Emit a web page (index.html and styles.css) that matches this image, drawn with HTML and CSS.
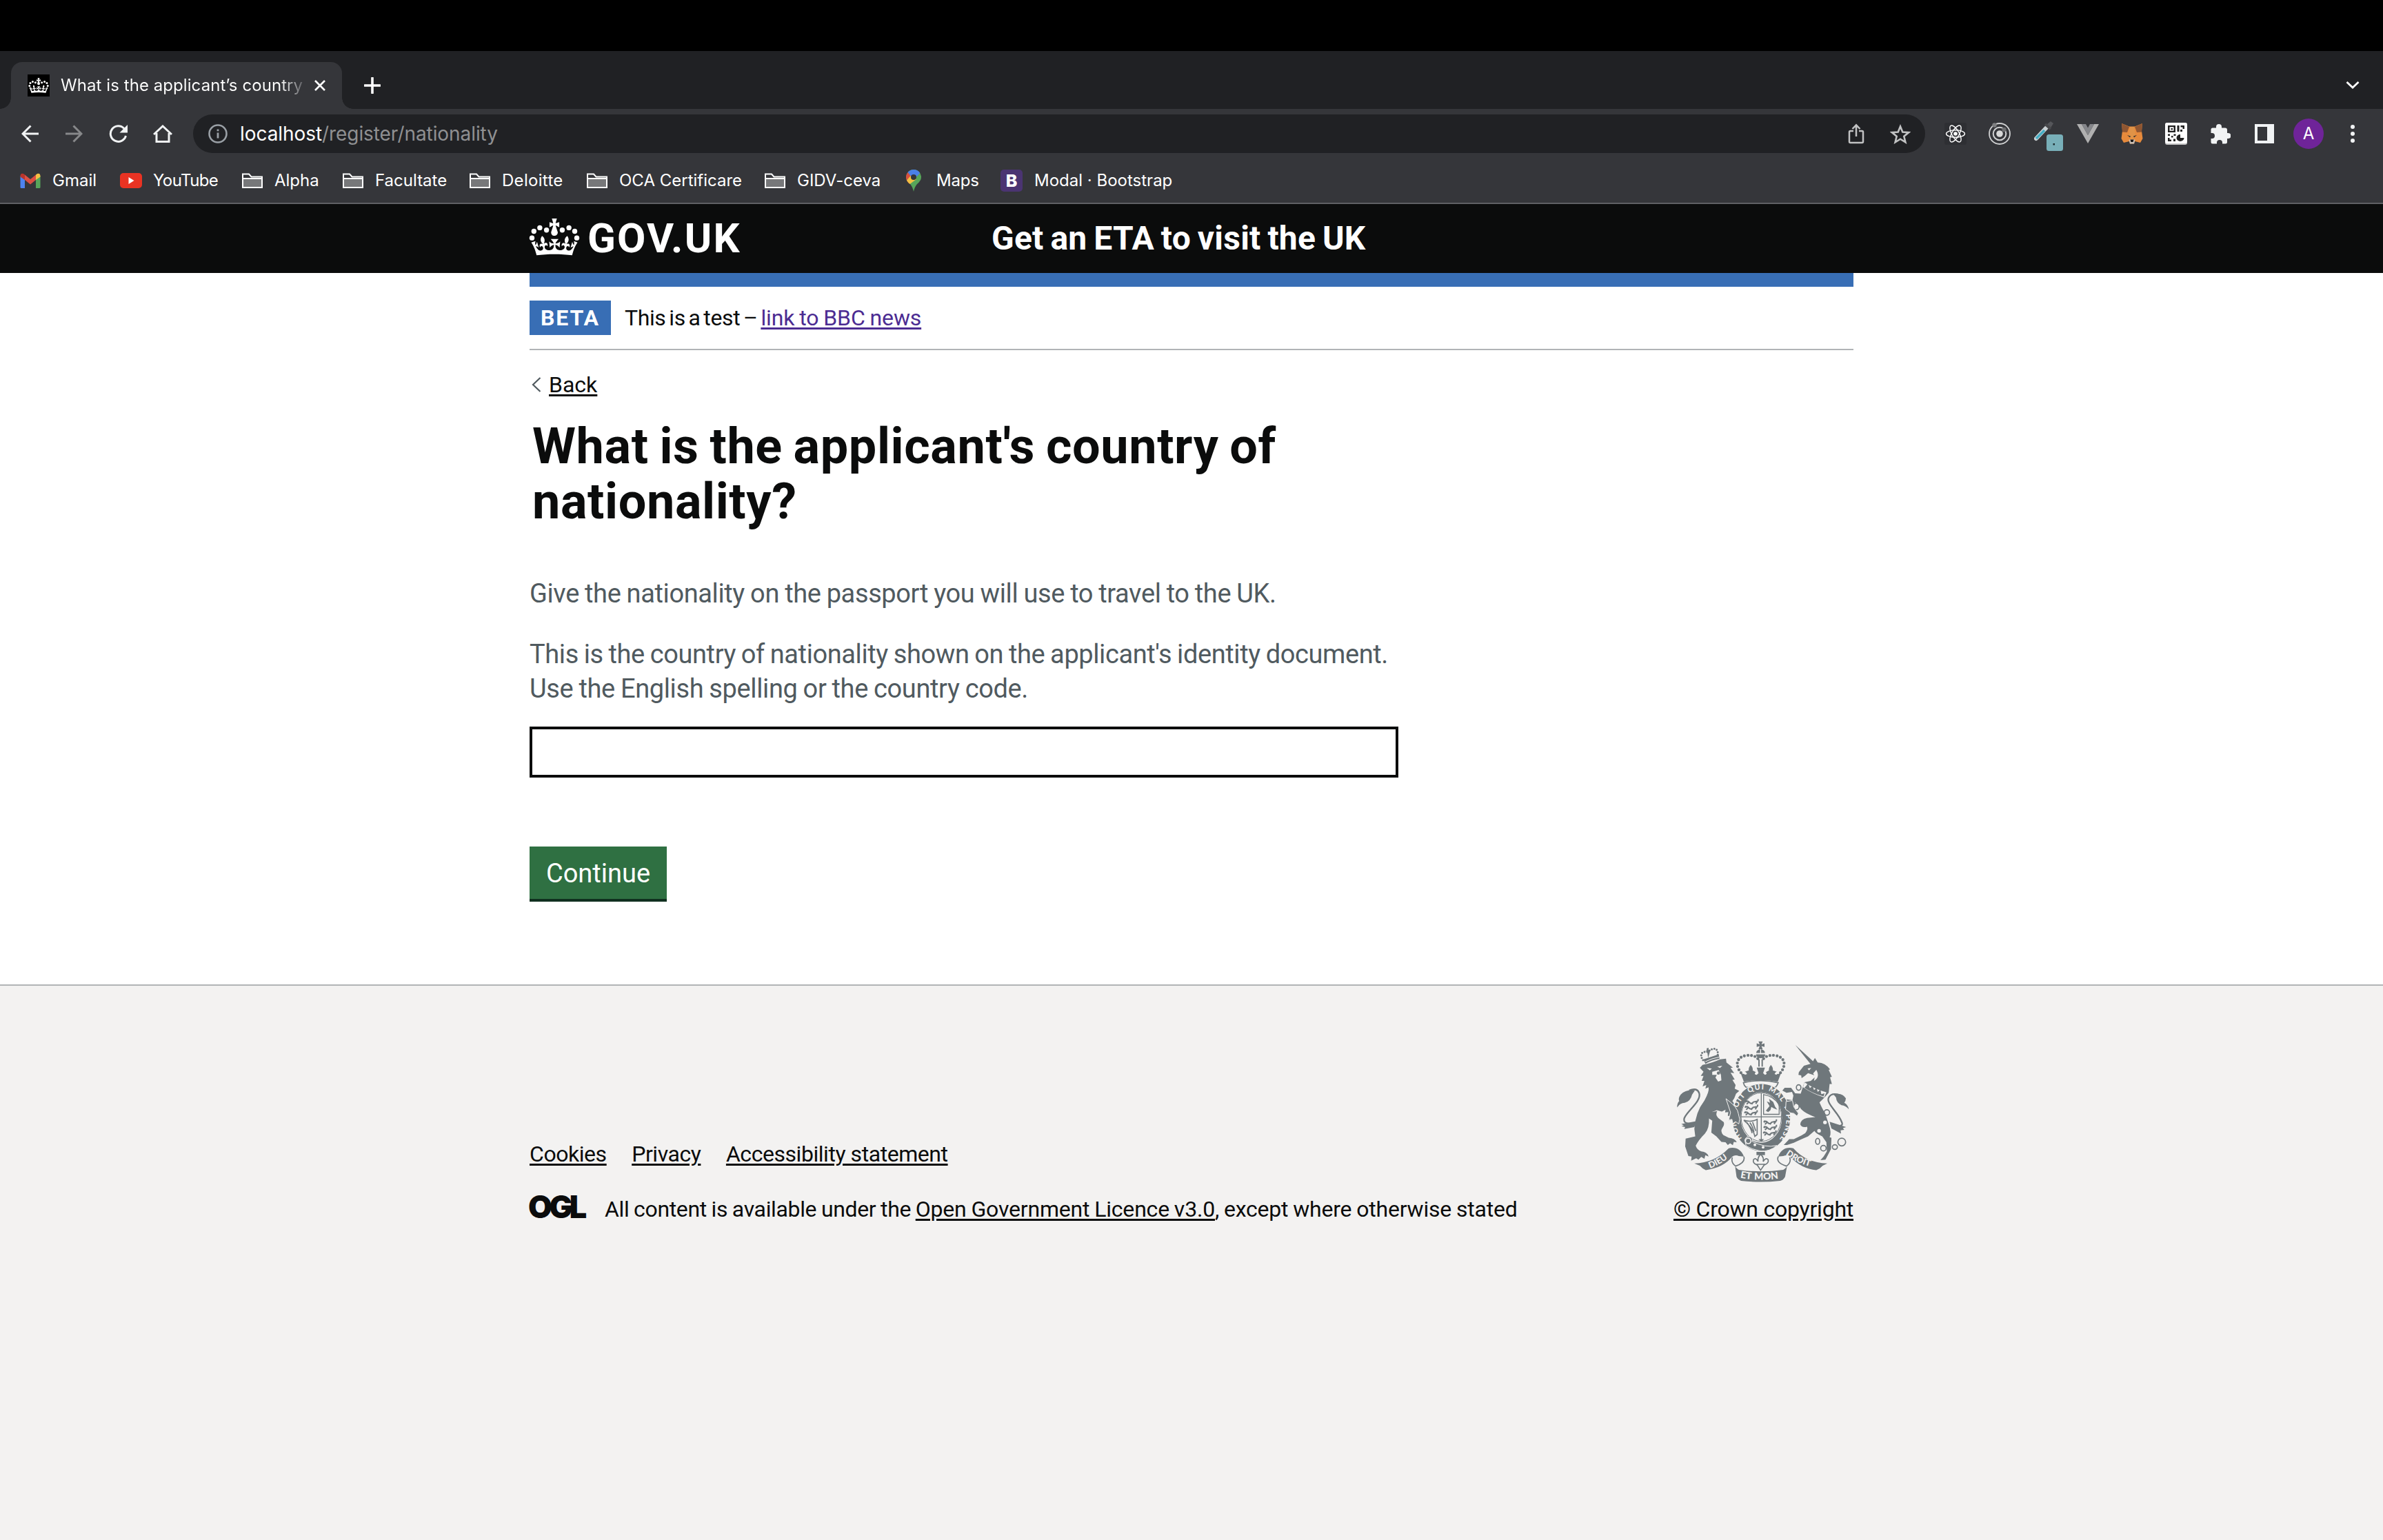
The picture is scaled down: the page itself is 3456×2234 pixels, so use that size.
FILE: index.html
```html
<!DOCTYPE html>
<html lang="en">
<head>
<meta charset="utf-8">
<title>What is the applicant's country of nationality?</title>
<link rel="stylesheet" href="styles.css">
</head>
<body>
<svg class="defs" width="0" height="0">
  <defs>
    <symbol id="folder" viewBox="0 0 32 24"><path d="M2 22V2.500H11L14.500 6.500H30V22Z" fill="#35363a" stroke="#fff" stroke-width="2"/><path d="M2 9H30V22H2Z" fill="#77787a" stroke="#fff" stroke-width="2"/></symbol>
    <symbol id="crown" viewBox="22 33 220 161">
      <g fill="currentColor">
        <circle cx="35" cy="117" r="11"/><circle cx="43.500" cy="88" r="11"/><circle cx="69" cy="73" r="11"/><circle cx="98" cy="83" r="11"/>
        <circle cx="229" cy="117" r="11"/><circle cx="220" cy="88" r="11"/><circle cx="195" cy="73" r="11"/><circle cx="166" cy="83" r="11"/>
        <path transform="translate(29.600 33) scale(6.400)" d="M17 4.700l2.300 1.200V2.500l-2.300.7-.2-.2.9-3h-3.400l.9 3-.2.200c-.1.100-2.300-.7-2.300-.7v3.400L15 4.700c.1.100.1.200.2.200l-1.300 4c-.1.200-.1.400-.1.600 0 1.100.8 2 1.900 2.200h.7c1-.2 1.900-1.100 1.900-2.100 0-.2 0-.4-.1-.6l-1.300-4c-.1-.2 0-.2.100-.3"/>
        <path transform="translate(32 3) scale(6.250 6.300)" d="M16 29.200c4.400 0 8.600.3 12.300.8 1.100-4.500 2.400-7 3.700-8.800l-2.500-.9c.2 1.300.3 1.900 0 2.700-.4-.4-.8-1.100-1.100-2.300l-1.200 4c.7-.5 1.300-.8 2-.9-1.100 2.500-2.600 3.100-3.500 3-1.100-.2-1.700-1.200-1.500-2.100.3-1.200 1.500-1.500 2.100-.1 1.100-2.300-.8-3-2-2.300 1.900-1.900 2.100-3.500.6-5.600-2.100 1.600-2.100 3.200-1.200 5.500-1.200-1.400-3.200-.6-2.500 1.600.9-1.400 2.100-.5 1.900.8-.2 1.100-1.700 2.100-3.500 1.900-2.700-.2-2.900-2.100-2.900-3.600.7-.1 1.900.5 2.900 1.900l.4-4.300c-1.100 1.100-2.100 1.400-3.200 1.400.4-1.200 2.100-3 2.100-3h-5.400s1.700 1.900 2.100 3c-1.100 0-2.100-.2-3.200-1.400l.4 4.300c1-1.400 2.200-2 2.900-1.900-.1 1.500-.2 3.400-2.900 3.600-1.900.2-3.400-.8-3.500-1.900-.2-1.300 1-2.200 1.900-.8.700-2.300-1.200-3-2.500-1.600.9-2.200.9-3.900-1.200-5.500-1.500 2-1.300 3.700.6 5.600-1.200-.7-3.100 0-2 2.300.6-1.400 1.800-1.100 2.100.1.200.9-.3 1.900-1.500 2.100-.9.200-2.400-.5-3.500-3 .6 0 1.200.3 2 .9l-1.200-4c-.3 1.100-.7 1.900-1.100 2.300-.3-.8-.2-1.400 0-2.700l-2.900.9C1.300 23 2.600 25.500 3.700 30c3.700-.5 7.900-.8 12.300-.8"/>
      </g>
    </symbol>
  </defs>
</svg>

<div class="notch"></div>
<div class="tabstrip">
  <div class="tab">
    <span class="favicon"><svg width="30" height="22"><use href="#crown"/></svg></span>
    <span class="tab-title">What is the applicant’s country</span>
    <svg class="tab-close" width="18" height="18" viewBox="0 0 18 18"><path d="M2 2L16 16M16 2L2 16" stroke="#fff" stroke-width="2.600"/></svg>
  </div>
  <svg class="newtab" width="24" height="24" viewBox="0 0 24 24"><path d="M12 1V23M1 12H23" stroke="#fff" stroke-width="3.600" stroke-linecap="round"/></svg>
  <svg class="tabmenu" width="20" height="13" viewBox="0 0 20 13"><path d="M1.500 2L10 10L18.500 2" fill="none" stroke="#fff" stroke-width="2.800"/></svg>
</div>

<div class="toolbar">
  <div class="nav">
    <svg width="26" height="26" viewBox="0 0 26 26"><path d="M25 13H2M13.500 1.500L2 13L13.500 24.500" fill="none" stroke="#f1f3f4" stroke-width="3"/></svg>
    <svg width="26" height="26" viewBox="0 0 26 26"><path d="M1 13H24M12.500 1.500L24 13L12.500 24.500" fill="none" stroke="#87888a" stroke-width="3"/></svg>
    <svg class="reload" width="28" height="26" viewBox="0 0 28 26"><path d="M22 5.500A11.300 11.300 0 1 0 24.500 16" fill="none" stroke="#f1f3f4" stroke-width="3"/><path d="M27 0V11.500H15.500Z" fill="#f1f3f4"/></svg>
    <svg width="28" height="26" viewBox="0 0 28 26"><path d="M1 14L14 2L27 14M5 12V24.500H23V12" fill="none" stroke="#f1f3f4" stroke-width="3"/></svg>
  </div>
  <div class="omnibox">
    <svg width="28" height="28" viewBox="0 0 28 28"><circle cx="14" cy="14" r="12.500" fill="none" stroke="#9aa0a6" stroke-width="2.600"/><path d="M14 12.500V20.500M14 7.500V10.300" stroke="#9aa0a6" stroke-width="2.800"/></svg>
    <span class="url"><span class="host">localhost</span><span class="path">/register/nationality</span></span>
    <svg class="share" width="24" height="30" viewBox="0 0 24 30"><path d="M8 11H3.500Q2 11 2 12.500V26.500Q2 28 3.500 28H20.500Q22 28 22 26.500V12.500Q22 11 20.500 11H16M12 19V2M6.500 8L12 2.300L17.500 8" fill="none" stroke="#c1c2c3" stroke-width="2.500"/></svg>
    <svg width="30" height="29" viewBox="0 0 30 29"><path d="M15 3.500L18.300 11.600L27 12.200L20.300 17.800L22.400 26.300L15 21.700L7.600 26.300L9.700 17.800L3 12.200L11.700 11.600Z" fill="none" stroke="#c1c2c3" stroke-width="2.600"/></svg>
  </div>
  <div class="extensions">
    <svg width="32" height="32" viewBox="0 0 32 32"><rect width="32" height="32" rx="3" fill="#2e2f33"/><g fill="none" stroke="#fff" stroke-width="1.400"><ellipse cx="16" cy="16" rx="13.500" ry="5.200"/><ellipse cx="16" cy="16" rx="13.500" ry="5.200" transform="rotate(60 16 16)"/><ellipse cx="16" cy="16" rx="13.500" ry="5.200" transform="rotate(120 16 16)"/></g><circle cx="16" cy="16" r="2.800" fill="#fff"/></svg>
    <svg width="32" height="32" viewBox="0 0 32 32"><g fill="none" stroke="#cfd0d1"><circle cx="16" cy="16" r="15" stroke-width="1.800"/><circle cx="16" cy="16" r="9.300" stroke-width="2"/></g><circle cx="16" cy="16" r="4.800" fill="#d8d8d8"/><circle cx="8.500" cy="3.500" r="3.200" fill="#7d7e80"/><circle cx="22.500" cy="10" r="3.200" fill="#6d6e70"/></svg>
    <svg class="picker" width="42" height="44" viewBox="0 0 42 44"><path d="M3 26L18 10" stroke="#c9d0d3" stroke-width="6" stroke-linecap="round"/><path d="M3 26L15 14" stroke="#45aec4" stroke-width="3.500"/><path d="M18 6L23 12L28 4L24 1Z" fill="#55565a"/><path d="M16 5L24 12" stroke="#47484b" stroke-width="4"/><rect x="18" y="20" width="24" height="24" rx="3.500" fill="#78afb8"/><rect x="27.500" y="33" width="2.500" height="2.500" fill="#1c2b2e"/></svg>
    <svg width="32" height="28" viewBox="0 0 32 28"><path d="M0 0H7L16 16L25 0H32L16 28Z" fill="#b0b0b0"/><path d="M7 0H13L16 5.500L19 0H25L16 16Z" fill="#85868a"/></svg>
    <svg width="32" height="30" viewBox="0 0 32 30"><path d="M1 0L12 4.500H20L31 0L30 11L31.500 22L28 28L20 26L19 29.500H13L12 26L4 28L.5 22L2 11Z" fill="#e68a3c"/><path d="M1 0L12 5L9 13L2 12.500Z" fill="#8f5632"/><path d="M31 0L20 5L23 13L30 12.500Z" fill="#8f5632"/><path d="M13 5H19L21 18L16 25L11 18Z" fill="#e09347"/><path d="M9 17L14 18.500L13 20.500Z" fill="#3a3330"/><path d="M23 17L18 18.500L19 20.500Z" fill="#3a3330"/><path d="M11.500 23.500H20.500L19 29.500H13Z" fill="#c9bfb5"/><path d="M13.500 23.500H18.500L17.500 27H14.500Z" fill="#171514"/></svg>
    <svg width="32" height="32" viewBox="0 0 32 32"><rect width="32" height="32" rx="3" fill="#c8c8c8"/><rect width="32" height="30" rx="3" fill="#fff"/><g fill="#222"><path d="M4 4H15V14H4ZM6.500 6.300V11.700H12.500V6.300Z" fill-rule="evenodd"/><rect x="8.500" y="8" width="2.500" height="2.300"/><rect x="17.500" y="4" width="3" height="9"/><path d="M22.500 4H28V9H25.500V6.500H22.500Z"/><rect x="22" y="10" width="3" height="3"/><path d="M4 16.500H7V19H4ZM9 19H11.500V21.500H9ZM12.500 16.500H15.500V19H12.500ZM4 22H6.500V24.500H9V27H4ZM12 23.500H15V27H12Z"/><path d="M22 17V22H27.500A5.500 5 0 1 1 22 17Z"/></g></svg>
    <svg class="puzzle" width="29" height="29" viewBox="0 0 29 29"><path d="M8 5.500V4A4 4 0 0 1 16 4V5.500H21Q24 5.500 24 8.500V13H25.500A4 4 0 0 1 25.500 21H24V26Q24 28.500 21.500 28.500H17V27A4 4 0 0 0 9 27V28.500H3Q.5 28.500 .5 26V21H2A4 4 0 0 0 2 13H.5V8Q.5 5.500 3 5.500Z" fill="#f1f3f4"/></svg>
    <svg class="panel" width="28" height="28" viewBox="0 0 28 28"><path d="M0 0H28V28H0ZM4 4V24H18V4Z" fill="#f1f3f4" fill-rule="evenodd"/></svg>
    <span class="avatar">A</span>
    <svg class="kebab" width="6" height="26" viewBox="0 0 6 26"><g fill="#f1f3f4"><circle cx="3" cy="3" r="3"/><circle cx="3" cy="13" r="3"/><circle cx="3" cy="23" r="3"/></g></svg>
  </div>
</div>

<div class="bookmarks">
  <span class="bm gmail"><svg width="32" height="24" viewBox="0 0 32 24"><path d="M1.500 5V21.500Q1.500 23 3 23H8V10Z" fill="#4e83ee"/><path d="M30.500 5V21.500Q30.500 23 29 23H24V10Z" fill="#57a65b"/><path d="M8 3.500L16 10L24 3.500V11L16 17.500L8 11Z" fill="#dc4f43"/><path d="M1.500 5Q2 .5 6 2L8 3.500V11L1.500 6.500Z" fill="#b8352c"/><path d="M30.500 5Q30 .5 26 2L24 3.500V11L30.500 6.500Z" fill="#f4c044"/></svg><span>Gmail</span></span>
  <span class="bm youtube"><svg width="32" height="22" viewBox="0 0 32 22"><rect width="32" height="22" rx="5" fill="#e93323"/><path d="M12.500 6L20.500 11L12.500 16Z" fill="#fff"/></svg><span>YouTube</span></span>
  <span class="bm b3"><svg width="32" height="24"><use href="#folder"/></svg><span>Alpha</span></span>
  <span class="bm b4"><svg width="32" height="24"><use href="#folder"/></svg><span>Facultate</span></span>
  <span class="bm b5"><svg width="32" height="24"><use href="#folder"/></svg><span>Deloitte</span></span>
  <span class="bm b6"><svg width="32" height="24"><use href="#folder"/></svg><span>OCA Certificare</span></span>
  <span class="bm b7"><svg width="32" height="24"><use href="#folder"/></svg><span>GIDV-ceva</span></span>
  <span class="bm maps"><svg width="22" height="32" viewBox="0 0 22 32"><path d="M11 0A11 11 0 0 1 22 11Q22 16 16 21Q12.500 25 11 32Q9.500 25 6 21Q0 16 0 11A11 11 0 0 1 11 0Z" fill="#57a55a"/><path d="M2.500 4L8 9L11 15L4 20Q0 15.500 0 11Q0 7 2.500 4Z" fill="#d9503f"/><path d="M1 15.500L8 7.500L15 14L5.500 21Q2 18 1 15.500Z" fill="#f2c043"/><path d="M2.500 4Q6 0 11 0Q17 0 20.300 5L12 14L7 9.500Z" fill="#4a80e8"/><circle cx="11" cy="11" r="4" fill="#35363a"/></svg><span>Maps</span></span>
  <span class="bm boot"><span class="boot-icon">B</span><span>Modal · Bootstrap</span></span>
</div>

<header class="header">
  <div class="container header-row">
    <a class="logo"><svg width="74" height="54"><use href="#crown"/></svg><span class="logotype">GOV.UK</span></a>
    <a class="service">Get an ETA to visit the UK</a>
  </div>
</header>

<main class="container main">
  <div class="bluebar"></div>
  <div class="phase">
    <strong class="tag">BETA</strong>
    <span class="phase-text">This is a test – <a class="visited">link to BBC news</a></span>
  </div>
  <div class="back"><svg width="14" height="22" viewBox="0 0 14 22"><path d="M12.500 1L2 11L12.500 21" fill="none" stroke="#505a5f" stroke-width="2.200"/></svg><a class="link">Back</a></div>
  <h1>What is the applicant's country of<br>nationality?</h1>
  <p class="hint">Give the nationality on the passport you will use to travel to the UK.</p>
  <p class="hint second">This is the country of nationality shown on the applicant's identity document.<br><span class="spelling">Use the English spelling or the country code.</span></p>
  <input class="input" type="text">
  <button class="button" type="button">Continue</button>
</main>

<footer class="footer">
  <div class="container footer-row">
    <div class="meta">
      <div class="links"><a class="link">Cookies</a><a class="link">Privacy</a><a class="link">Accessibility statement</a></div>
      <div class="licence"><span class="ogl">OGL</span><span class="licence-text">All content is available under the <a class="link">Open Government Licence v3.0</a><span class="except">, except where otherwise stated</span></span></div>
    </div>
    <div class="crest">
      <svg width="250" height="205" viewBox="96 88 752 616">
        <defs>
          <path id="garter" d="M380 512A110 129 0 1 1 532 528"/>
          <path id="rl" d="M240 644Q296 624 344 576"/><path id="rr" d="M570 584Q630 630 716 644"/><path id="rc" d="M372 685Q461 702 560 685"/>
          <g id="arch"><path d="M386 238C345 200 352 156 402 151C430 148 448 160 450 168" fill="none" stroke="#6f777b" stroke-width="13" stroke-linecap="round" stroke-dasharray="0 15.500"/></g>
          <g id="lions" fill="none" stroke="#6f777b" stroke-width="6"><path d="M0 8Q10 0 18 10T36 8L56 4M6 18L14 10M28 18L34 10M46 16L52 6M2 2L8 8M56 4V-4"/></g>
        </defs>
        <g fill="#6f777b">
          <!-- tails -->
          <g fill="none" stroke="#6f777b" stroke-width="7"><path d="M178 448Q120 455 128 425C138 395 205 350 193 315Q184 290 150 304"/><path d="M766 450Q830 470 814 440C800 400 745 360 758 335Q770 312 806 324"/></g>
          <path d="M175 303Q135 298 112 322Q100 340 106 350Q96 360 97 378Q110 358 130 358Q156 350 162 322Z"/>
          <path d="M780 322Q815 310 833 338Q832 352 826 358Q842 366 846 386Q832 370 814 368Q792 358 790 334Z"/>
          <path d="M180 438L115 450L126 456L116 460L132 464L128 472L172 464Z"/><path d="M762 440L834 464L820 468L826 476L810 478L812 492L770 470Z"/>
          <!-- lion -->
          <path d="M196 205L208 192Q250 184 284 168L310 165L312 182L340 204L330 206L346 228L330 226L348 256L338 258L352 280L348 296L368 306L354 318L346 338L338 350Q362 378 366 405Q374 430 366 448L352 440L340 446L338 430L322 434L326 416L318 414L320 398L306 400L308 388L292 396L270 390L248 398L272 394Q262 410 276 424L300 442Q305 452 294 468Q284 482 298 498L322 510Q350 512 357 530L344 528L340 543L328 534L318 542L308 530L290 528L268 504L246 488L250 436L236 426Q238 470 218 492Q190 520 178 545Q184 564 202 570Q228 572 234 592L220 586L216 602L202 594L190 606L180 600L158 610L160 592L146 590L132 548L134 514L176 504L172 472Q176 400 216 348Q238 308 234 290L220 296L224 280L208 286L216 262L204 262L212 240L200 240L212 222Z"/>
          <path d="M250 222L278 215L288 236L290 260L276 265L264 248L270 236L250 236Z" fill="#f3f2f1"/><path d="M226 206L248 208L240 216Z" fill="#f3f2f1"/><path d="M272 200L294 196L284 206Z" fill="#f3f2f1"/><circle cx="277" cy="228" r="7"/>
          <path d="M212 168L278 146L282 166Q246 172 220 188Z"/><path d="M210 172C192 146 206 132 230 136C252 116 278 116 274 150" fill="none" stroke="#6f777b" stroke-width="9" stroke-linecap="round" stroke-dasharray="0 11.500"/><path d="M226 120L234 118L234 128L242 128L232 162L228 132L220 132L226 128Z"/>
          <path d="M220 178Q248 164 280 158" stroke="#f3f2f1" stroke-width="3" fill="none"/>
          <!-- unicorn -->
          <path d="M612 105L694 180L680 190Z"/>
          <path d="M684 186L698 162L710 182Q744 184 764 212L758 214L772 244L764 246L772 276L762 276L758 314L744 330Q725 350 718 356Q732 388 742 402L758 450Q772 490 762 508L770 510L768 560L744 606L722 608L736 592L750 570L748 530L730 504Q700 490 696 480L668 504Q630 520 606 532L576 542L562 542L586 516L606 516L640 500L656 490Q668 474 664 462Q640 468 634 452Q636 430 664 424L700 420Q640 400 628 370L612 356L606 376L624 400L620 416L608 404L594 400L566 352L570 342L600 346L604 326L598 310L574 314L556 304L566 292L594 292L612 316L636 318L652 268L680 262L704 240L690 236L668 228L654 240L640 250L638 238L626 236L628 224L650 196Z"/>
          <path d="M652 268Q700 300 748 312L738 334Q690 320 646 290Z" fill="#f3f2f1"/><path d="M660 284L668 272L676 294L688 284L694 302L706 292L710 310L722 300L726 320L740 316L736 330Q690 318 652 292Z"/><path d="M704 214Q722 246 694 262Q700 240 690 230Z" fill="#f3f2f1"/><path d="M666 208L682 206L672 216Z" fill="#f3f2f1"/>
          <circle cx="742" cy="443" r="8" fill="#f3f2f1"/><circle cx="716" cy="480" r="8" fill="#f3f2f1"/>
          <g fill="none" stroke="#6f777b" stroke-width="5"><ellipse cx="627" cy="291" rx="10" ry="12"/><ellipse cx="617" cy="374" rx="12" ry="14"/><circle cx="750" cy="400" r="12"/><ellipse cx="710" cy="526" rx="9" ry="13"/><circle cx="735" cy="556" r="12"/><ellipse cx="785" cy="551" rx="11" ry="10"/><circle cx="815" cy="529" r="17"/></g>
          <!-- royal crown -->
          <path d="M452 90H470L465 103L478 98V114L465 110L470 124H452L457 110L444 114V98L457 103Z"/><path d="M442 140A19 16 0 0 1 480 140Z"/><path d="M441 146H482Q480 162 461 163Q443 162 441 146Z"/><path d="M461 124V145" stroke="#f3f2f1" stroke-width="4"/>
          <use href="#arch"/><use href="#arch" transform="matrix(-1 0 0 1 923 0)"/><path d="M454 168V200M468 168V200" stroke="#6f777b" stroke-width="6"/>
          <path d="M372 222L380 228Q388 240 402 232Q398 222 392 222L410 216Q406 206 418 192Q430 206 426 216L440 224Q430 234 444 236L452 228L444 204H480L472 228L480 236Q492 234 484 224L498 216Q494 206 506 192Q518 206 514 216L532 222Q526 222 522 232Q536 240 544 228L552 222L536 266Q461 252 388 266Z"/>
          <path d="M386 270Q461 252 538 270Q534 282 526 290H398Q388 282 386 270Z" fill="#f3f2f1" stroke="#6f777b" stroke-width="5"/>
          <!-- garter and shield -->
          <ellipse cx="464" cy="422" rx="130" ry="150" fill="#f3f2f1"/><ellipse cx="464" cy="422" rx="108" ry="128" fill="none" stroke="#6f777b" stroke-width="36"/>
          <ellipse cx="464" cy="420" rx="88" ry="106" fill="#f3f2f1" stroke="#6f777b" stroke-width="3"/>
          <path d="M464 314V526M376 419H552" stroke="#6f777b" stroke-width="4"/><path d="M474 322V408H542V366Q520 330 474 322Z" fill="none" stroke="#6f777b" stroke-width="4"/>
          <use href="#lions" x="394" y="346"/><use href="#lions" x="392" y="370"/><use href="#lions" x="390" y="394"/><use href="#lions" x="474" y="434"/><use href="#lions" x="474" y="458"/><use href="#lions" x="472" y="482"/>
          <path d="M484 392L500 372L488 352L502 358L498 340L516 354L524 374L534 388L518 382L508 376L504 390L494 398Z"/>
          <path d="M388 434Q420 444 446 430V496L436 504Q430 470 388 434ZM402 444Q420 470 424 490M414 444Q428 462 432 486M426 442L440 480" fill="none" stroke="#6f777b" stroke-width="5"/>
          <path d="M452 516L476 516L464 528Z"/>
          <text class="motto" font-size="32" word-spacing="5" transform="translate(0 1)"><textPath href="#garter" textLength="560">HONI SOIT QUI MAL Y PENSE</textPath></text>
          <path d="M310 340Q362 378 364 405Q374 430 366 450L352 440L340 448L336 430L322 432L330 400Z" stroke="#f3f2f1" stroke-width="3"/>
          <path d="M572 352L600 348L606 376L626 404L620 416L606 404L592 402L570 386Z" stroke="#f3f2f1" stroke-width="3"/>
          <path d="M392 520Q400 500 416 506Q430 514 424 526Q480 556 532 544Q500 572 460 568Q420 560 398 546Z" stroke="#f3f2f1" stroke-width="3"/><circle cx="407" cy="524" r="12" fill="none" stroke="#f3f2f1" stroke-width="5"/><circle cx="436" cy="541" r="6" fill="#f3f2f1"/><circle cx="472" cy="552" r="6" fill="#f3f2f1"/>
          <!-- fleur-de-lis pendant -->
          <path d="M443 572H480V586H443Z"/><path d="M461 582Q478 598 472 614Q484 594 494 606Q498 622 476 630L461 652L447 630Q425 622 430 606Q440 594 450 614Q446 598 461 582ZM440 626H484" fill="#f3f2f1" stroke="#6f777b" stroke-width="5"/>
          <!-- motto ribbon -->
          <path d="M172 622Q260 620 322 556Q370 546 388 592L366 590Q350 582 336 594Q300 640 222 652Q206 644 196 632Z"/>
          <path d="M752 622Q660 620 604 556Q556 546 538 592L560 590Q578 582 590 594Q640 646 704 652Q722 644 732 632Z"/>
          <path d="M388 592Q396 620 352 634Q330 618 338 596M538 592Q526 620 574 634Q596 618 588 596" fill="none" stroke="#6f777b" stroke-width="5"/>
          <path d="M350 636Q358 646 366 650Q461 664 560 650Q570 644 576 636L568 680Q560 696 546 698Q461 708 376 698Q360 692 356 680Z"/>
          <text class="motto" font-size="38"><textPath href="#rl">DIEU</textPath></text>
          <text class="motto" font-size="38"><textPath href="#rr">DROIT</textPath></text>
          <text class="motto" font-size="42" word-spacing="4"><textPath href="#rc">ET MON</textPath></text>
        </g>
      </svg>
      <a class="link">© Crown copyright</a>
    </div>
  </div>
</footer>
</body>
</html>
```
FILE: styles.css
```css
* { box-sizing: border-box; }
body { margin: 0; background: #fff; color: #0b0c0c; font-family: Roboto, "Liberation Sans", sans-serif; min-height: 2234px; display: flex; flex-direction: column; }
svg { display: block; flex: none; }
.defs { position: absolute; }
span, a { white-space: nowrap; }

/* browser window */
.notch { height: 74px; background: #000; }
.tabstrip { height: 84px; background: #202124; display: flex; align-items: flex-end; font-family: Inter, sans-serif; padding-left: 16px; }
.tab { position: relative; width: 480px; height: 68px; background: #35363a; border-radius: 16px 16px 0 0; display: flex; align-items: center; padding-left: 24px; }
.tab::before, .tab::after { content: ""; position: absolute; bottom: 0; width: 16px; height: 16px; }
.tab::before { left: -16px; background: radial-gradient(circle at 0 0, #202124 15.5px, #35363a 16px); }
.tab::after { right: -16px; background: radial-gradient(circle at 100% 0, #202124 15.5px, #35363a 16px); }
.favicon { width: 32px; height: 32px; background: #000; color: #fff; display: flex; align-items: center; justify-content: center; }
.tab-title { margin-left: 16px; width: max-content; font-size: 24px; line-height: 32px; letter-spacing: 0.07px; background: linear-gradient(90deg, #fff 318px, #606165 351px); -webkit-background-clip: text; background-clip: text; color: transparent; }
.tab-close { position: absolute; left: 439px; top: 25px; }
.newtab { margin: 0 0 22px 32px; }
.tabmenu { margin: 0 34px 28px auto; }
.toolbar { height: 72px; background: #35363a; display: flex; align-items: center; font-family: Inter, sans-serif; }
.nav { display: flex; gap: 37px; padding-left: 31px; width: 280px; }
.reload { margin: 0 -1px 0 1px; }
.omnibox { width: 2512px; height: 56px; border-radius: 28px; background: #202124; display: flex; align-items: center; padding: 0 21px 0 22px; }
.url { font-size: 28px; line-height: 40px; margin-left: 18px; letter-spacing: -0.07px; }
.host { color: #fff; }
.path { color: #8f9092; }
.share { margin: 0 37px 0 auto; }
.extensions { display: flex; align-items: center; padding-left: 28px; flex: 1; gap: 32px; }
.picker { margin: 6px -12px 0 2px; align-self: flex-start; }
.puzzle { margin-left: 2px; }
.panel { margin-left: 3px; }
.avatar { width: 44px; height: 44px; margin-left: -4px; border-radius: 50%; background: #6f2499; color: #fff; font-size: 24px; line-height: 44px; text-align: center; }
.kebab { margin-left: 7px; }
.bookmarks { height: 66px; background: #35363a; border-bottom: 2px solid #5f6065; display: flex; align-items: center; font: 24px/32px Inter, sans-serif; color: #fff; padding-left: 28px; }
.bm { display: flex; align-items: center; }
.bm svg { margin-right: 16px; }
.gmail { width: 146px; }
.youtube { width: 176px; letter-spacing: -0.6px; }
.b3 { width: 146px; }
.b4 { width: 184px; }
.b5 { width: 170px; letter-spacing: 0.3px; }
.b6 { width: 258px; }
.b7 { width: 206px; }
.maps { width: 137px; letter-spacing: -0.2px; }
.bm.maps svg { margin-right: 22px; }
.boot-icon { width: 32px; height: 32px; margin-right: 17px; border-radius: 5px; background: #4b3472; font-weight: 800; font-size: 25px; text-align: center; }

/* site header */
.header { height: 100px; background: #0b0c0c; color: #fff; }
.container { width: 1920px; margin: 0 auto; }
.header-row { height: 100px; display: flex; align-items: center; }
.logo { display: flex; align-items: center; width: 670px; }
.logo svg { margin: -5px 11px 0 -1px; }
.logotype { font-size: 60px; font-weight: 700; line-height: 60px; letter-spacing: 2.2px; }
.service { font-size: 48px; font-weight: 700; line-height: 60px; letter-spacing: 0.2px; word-spacing: -2.2px; }
.bluebar { height: 20px; background: #386eb5; }

/* question page */
.phase { display: flex; align-items: center; padding: 20px 0; border-bottom: 2px solid #b1b4b6; font-size: 32px; line-height: 50px; }
.tag { width: 118px; height: 50px; margin-right: 20px; padding-left: 16px; background: #386eb5; color: #fff; font-weight: 700; letter-spacing: 1.9px; }
.phase-text { letter-spacing: -0.38px; word-spacing: -2.8px; }
.visited, .link { text-decoration: underline; text-decoration-thickness: 3px; text-underline-offset: 3px; }
.visited { color: #4c2c92; letter-spacing: -0.15px; word-spacing: -0.8px; }
.back { display: flex; align-items: center; height: 40px; margin-top: 30px; padding-left: 3px; gap: 11px; font-size: 32px; line-height: 40px; }
h1 { margin: 30px 0 0; padding-left: 4px; font-size: 72px; line-height: 80px; font-weight: 700; letter-spacing: 0.6px; word-spacing: -2.7px; }
.hint { margin: 68px 0 0; font-size: 38px; line-height: 50px; color: #505a5f; letter-spacing: -0.38px; word-spacing: -0.9px; }
.hint.second { margin-top: 38px; letter-spacing: -0.4px; word-spacing: -1.2px; }
.hint .spelling { letter-spacing: -0.38px; word-spacing: -0.9px; }
.input { display: block; width: 1260px; height: 74px; margin: 30px 0 0; border: 4px solid #0b0c0c; border-radius: 0; background: #fff; }
.button { display: block; width: 199px; height: 80px; margin: 100px 0 120px; padding: 2px 0 0; border: 0; border-bottom: 4px solid #10301f; background: #2f7042; color: #fff; font: 38px/50px Roboto, sans-serif; }

/* footer */
.footer { flex: 1; border-top: 2px solid #b1b4b6; background: #f3f2f1; padding-top: 80px; font-size: 32px; line-height: 40px; }
.footer-row { display: flex; justify-content: space-between; align-items: flex-end; height: 264px; }
.links { display: flex; gap: 36.5px; margin-bottom: 40px; letter-spacing: -0.45px; }
.licence { display: flex; height: 40px; }
.ogl { width: 110px; margin: 0 1px 0 -2px; font: 900 45px/34px Inter, sans-serif; letter-spacing: -4.5px; }
.licence-text { letter-spacing: -0.35px; word-spacing: -0.9px; }
.licence-text .link { letter-spacing: -0.2px; word-spacing: -0.8px; }
.licence-text .except { letter-spacing: -0.22px; word-spacing: -0.8px; }
.crest { display: flex; flex-direction: column; align-items: center; gap: 19px; width: 261px; letter-spacing: -0.23px; }
.crest svg { overflow: visible; margin-left: -2px; }
.motto { font-family: Lato, sans-serif; font-weight: 900; fill: #f3f2f1; }
```
